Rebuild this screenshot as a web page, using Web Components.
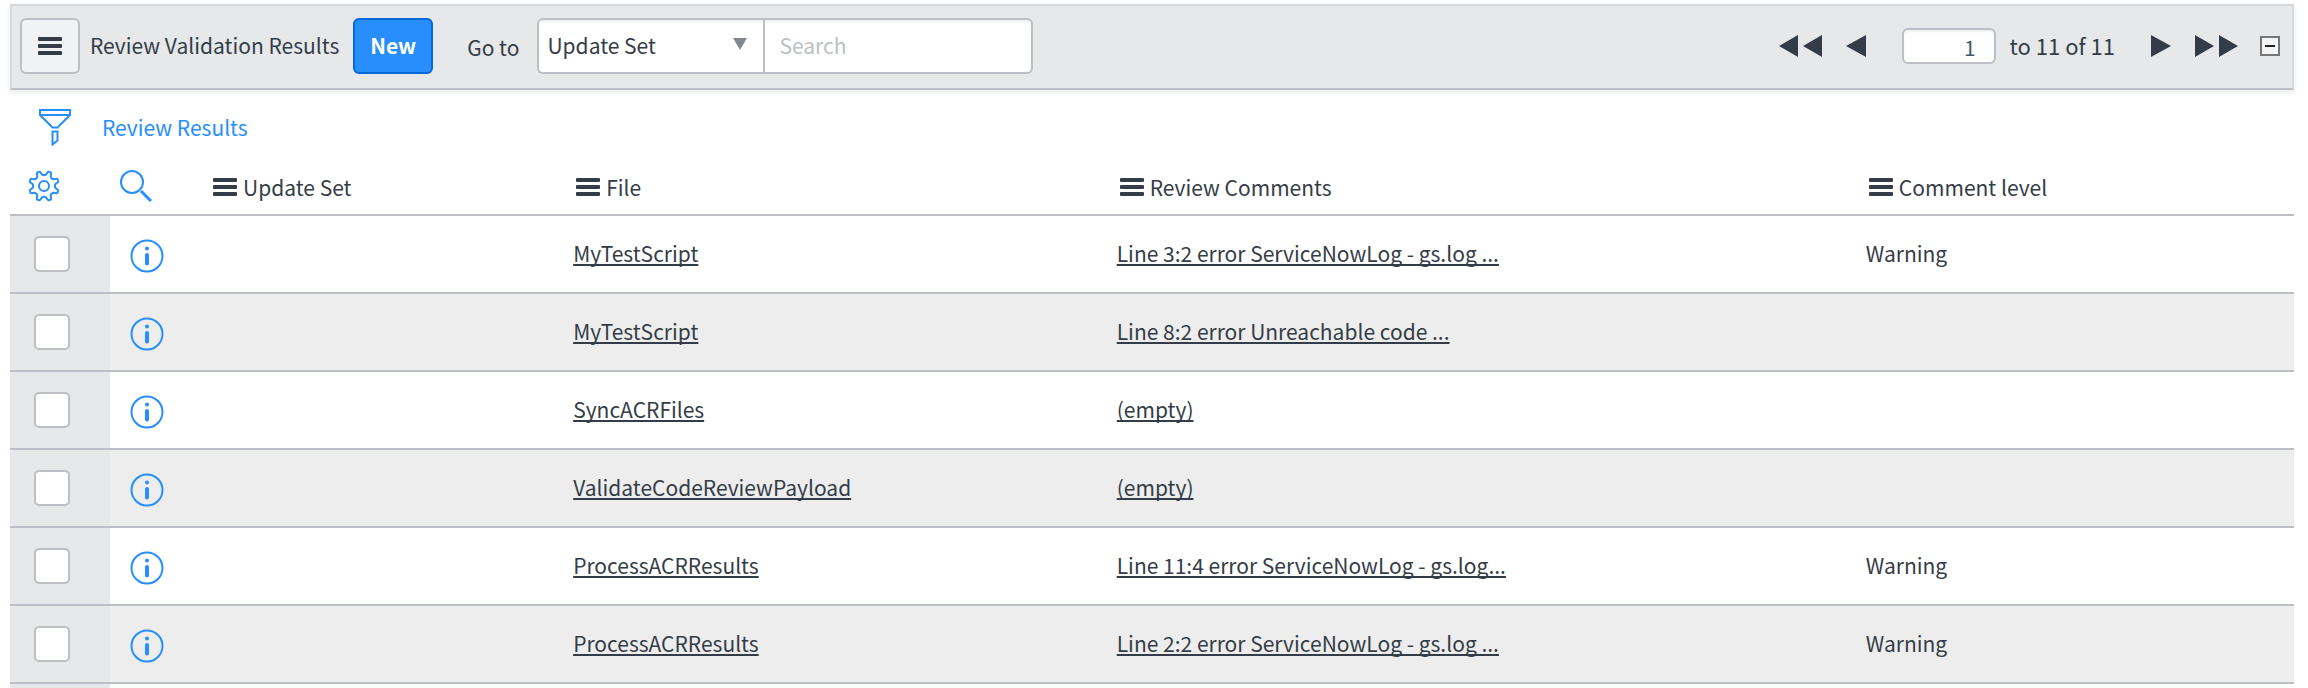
<!DOCTYPE html>
<html lang="en">
<head>
<meta charset="utf-8">
<title>Review Validation Results</title>
<style>
  body { margin: 0; background: #fff; color: #343d47; font: 21px/32px "Noto Sans CJK SC", "Noto Sans", sans-serif; }
</style>
</head>
<body>
<review-list></review-list>
<script>
// Outline of an eight-toothed gear centred on 16,16.
function gearPath() {
  const at = (deg, r) => {
    const a = deg * Math.PI / 180;
    return (16 + r * Math.cos(a)).toFixed(2) + ' ' + (16 + r * Math.sin(a)).toFixed(2);
  };
  let d = '';
  for (let k = 0; k < 8; k++) {
    const a = 22.5 + 45 * k;
    d += (k ? 'L' : 'M') + at(a - 8, 14) + 'Q' + at(a - 6, 15.5) + ' ' + at(a, 15) +
      'Q' + at(a + 6, 15.5) + ' ' + at(a + 8, 14) + 'L' + at(a + 12, 11.8) +
      'Q' + at(a + 22.5, 10) + ' ' + at(a + 33, 11.8);
  }
  return d + 'z';
}

const ICONS = {
  menu: [24, 18, '<path fill="currentColor" d="M1 0h22q1 0 1 1v2q0 1-1 1H1q-1 0-1-1V1q0-1 1-1zM1 7h22q1 0 1 1v2q0 1-1 1H1q-1 0-1-1V8q0-1 1-1zM1 14h22q1 0 1 1v2q0 1-1 1H1q-1 0-1-1v-2q0-1 1-1z"/>'],
  filter: [34, 38, '<g fill="none" stroke="currentColor" stroke-width="2"><path d="M2 2h30v5L19.500 19.500h-5L2 7zM2 7h30M14.500 23.500h5v9l-5 4z"/></g>'],
  gear: [32, 32, `<g fill="none" stroke="currentColor" stroke-width="2" stroke-linejoin="round"><path d="${gearPath()}"/><circle cx="16" cy="16" r="5"/></g>`],
  search: [32, 32, '<g fill="none" stroke="currentColor"><circle cx="12" cy="12" r="11" stroke-width="2"/><path stroke-width="3" d="M21 21 31 31"/></g>'],
  info: [34, 34, '<circle cx="17" cy="17" r="15.500" fill="none" stroke="currentColor" stroke-width="2"/><circle cx="17" cy="9.500" r="2" fill="currentColor"/><path stroke="currentColor" stroke-width="4" stroke-linecap="round" d="M17 16v8.500"/>'],
  first: [43, 22, '<path fill="currentColor" d="M0 11 19 0v22zM24 11 43 0v22z"/>'],
  prev: [20, 22, '<path fill="currentColor" d="M0 11 20 0v22z"/>'],
  next: [20, 22, '<path fill="currentColor" d="M20 11 0 0v22z"/>'],
  last: [43, 22, '<path fill="currentColor" d="M19 11 0 0v22zM43 11 24 0v22z"/>'],
  down: [14, 12, '<path fill="currentColor" d="M0 0h14L7 12z"/>'],
  collapse: [20, 20, '<path fill="#f5f5f5" stroke="#777" stroke-width="2" d="M1 1h18v18H1z"/><path stroke="#222" stroke-width="2" d="M5 10h10"/>']
};

class ListIcon extends HTMLElement {
  connectedCallback() {
    if (this.shadowRoot) return;
    const [w, h, body] = ICONS[this.getAttribute('name')];
    this.attachShadow({ mode: 'open' }).innerHTML =
      `<style>:host{display:inline-flex;flex:none}svg{display:block}</style>
       <svg width="${w}" height="${h}" viewBox="0 0 ${w} ${h}" aria-hidden="true">${body}</svg>`;
  }
}

const BUTTON = 'button{display:inline-flex;align-items:center;justify-content:center;margin:0;padding:0;border:0;background:none;color:inherit;font:inherit;cursor:pointer}';

class ListToolbar extends HTMLElement {
  constructor() {
    super();
    this.attachShadow({ mode: 'open' }).innerHTML = `
<style>
*{box-sizing:border-box}
${BUTTON}
:host{display:flex;align-items:flex-start;justify-content:space-between;box-sizing:border-box;padding:12px 12px 14px 8px;background:#e6e8ea;border:2px solid #d5d8dd;border-bottom-color:#bcbfc6;box-shadow:0 2px 6px rgba(0,0,0,.1)}
.group{display:flex;align-items:center;height:56px}
.menu,.new{height:56px;border:2px solid #bcbfc6;border-radius:6px;background:#f1f2f5}
.menu{width:60px}
h1{margin:0 14px 0 10px;padding-bottom:2px;font:inherit;white-space:nowrap}
.new{width:80px;padding-bottom:2px;background:#278efc;border-color:#0568d9;color:#fff;font-weight:700}
.goto{margin:2px 18px 0 34px;white-space:nowrap}
.pick{position:relative;display:flex}
select,input{margin:0;height:56px;border:2px solid #bcbfc6;background:#fff;color:inherit;font:inherit;outline:0;box-shadow:inset 0 2px 2px rgba(0,0,0,.06)}
select{appearance:none;width:226px;padding:0 8px 2px;border-radius:6px 0 0 6px;border-right:0}
.pick list-icon{position:absolute;right:16px;top:20px;color:#81878e;pointer-events:none}
.search{width:270px;padding:0 14px 2px;border-radius:0 6px 6px 0}
.search::placeholder{color:#bcbfc6;opacity:1}
.page{width:94px;height:36px;margin:0 14px 0 36px;padding:2px 18px 0 8px;border-radius:6px;text-align:right;color:#485563}
.range{padding-bottom:2px;font-size:22px;white-space:nowrap}
.first{margin-right:24px}
.next{margin:0 24px 0 36px}
.collapse{margin-left:22px}
</style>
<div class="group">
  <button class="menu" aria-label="List menu"><list-icon name="menu"></list-icon></button>
  <h1><slot></slot></h1>
  <button class="new">New</button>
  <label class="goto" for="field">Go to</label>
  <div class="pick"><select id="field"><option>Update Set</option></select><list-icon name="down"></list-icon></div>
  <input class="search" type="text" placeholder="Search" aria-label="Search">
</div>
<div class="group">
  <button class="first" aria-label="First page"><list-icon name="first"></list-icon></button>
  <button aria-label="Previous page"><list-icon name="prev"></list-icon></button>
  <input class="page" type="text" value="1" aria-label="Row number">
  <span class="range">to 11 of 11</span>
  <button class="next" aria-label="Next page"><list-icon name="next"></list-icon></button>
  <button aria-label="Last page"><list-icon name="last"></list-icon></button>
  <button class="collapse" aria-label="Collapse list"><list-icon name="collapse"></list-icon></button>
</div>`;
  }
}

class ListBreadcrumb extends HTMLElement {
  constructor() {
    super();
    this.attachShadow({ mode: 'open' }).innerHTML = `
<style>
${BUTTON}
:host{display:flex;align-items:center;gap:30px;box-sizing:border-box;height:70px;padding:4px 28px 0;color:#278efc}
a{color:inherit;text-decoration:none}
</style>
<button aria-label="Filter"><list-icon name="filter"></list-icon></button>
<a href="#"><slot></slot></a>`;
  }
}

const COLUMNS = ['Update Set', 'File', 'Review Comments', 'Comment level'];
const ROWS = [
  ['MyTestScript', 'Line 3:2 error ServiceNowLog - gs.log ...', 'Warning'],
  ['MyTestScript', 'Line 8:2 error Unreachable code ...', ''],
  ['SyncACRFiles', '(empty)', ''],
  ['ValidateCodeReviewPayload', '(empty)', ''],
  ['ProcessACRResults', 'Line 11:4 error ServiceNowLog - gs.log...', 'Warning'],
  ['ProcessACRResults', 'Line 2:2 error ServiceNowLog - gs.log ...', 'Warning']
];

class ListTable extends HTMLElement {
  constructor() {
    super();
    this.attachShadow({ mode: 'open' }).innerHTML = `
<style>
${BUTTON}
*{box-sizing:border-box}
:host{display:block}
table{width:100%;table-layout:fixed;border-collapse:separate;border-spacing:0}
.c-check{width:100px}.c-info{width:90px}.c-set{width:15.9%}.c-file{width:23.8%}.c-comment{width:32.8%}
th,td{padding:0 10px;text-align:left;vertical-align:middle;white-space:nowrap;border-bottom:2px solid #bcbfc6}
th{height:56px;font-weight:400}
th>div{display:flex;align-items:center;gap:6px;padding-left:3px}
th.tool{padding:0 16px;color:#278efc}
th.tool+.tool{padding-left:8px}
th.tool>div{padding:0 0 2px 2px}
td{height:78px;padding-bottom:2px}
tbody tr:nth-child(even){background:#ededed}
td.check{padding:0 24px;background:#e6e8ea}
td.info{padding:4px 20px 0;color:#278efc}
td>button,td>input{vertical-align:top}
input{appearance:none;display:block;width:36px;height:36px;margin:0;border:2px solid #bcbfc6;border-radius:5px;background:#fff}
td a{color:inherit;text-decoration:underline;text-decoration-thickness:2px;text-underline-offset:2px;text-decoration-skip-ink:none}
tfoot td{height:4px;padding:0;border:0}
</style>
<table>
<colgroup><col class="c-check"><col class="c-info"><col class="c-set"><col class="c-file"><col class="c-comment"><col></colgroup>
<thead><tr>
<th class="tool"><div><button aria-label="Personalize list"><list-icon name="gear"></list-icon></button></div></th>
<th class="tool"><div><button aria-label="Search list"><list-icon name="search"></list-icon></button></div></th>
${COLUMNS.map(c => `<th scope="col"><div><button aria-label="${c} options"><list-icon name="menu"></list-icon></button><span>${c}</span></div></th>`).join('')}
</tr></thead>
<tbody>
${ROWS.map(([file, comment, level], i) => `<tr>
<td class="check"><input type="checkbox" aria-label="Select row ${i + 1}"></td>
<td class="info"><button aria-label="Preview row ${i + 1}"><list-icon name="info"></list-icon></button></td>
<td></td><td><a href="#">${file}</a></td><td><a href="#">${comment}</a></td><td>${level}</td></tr>`).join('')}
</tbody>
<tfoot><tr><td class="check"></td><td colspan="5"></td></tr></tfoot>
</table>`;
  }
}

class ReviewList extends HTMLElement {
  constructor() {
    super();
    this.attachShadow({ mode: 'open' }).innerHTML = `
<style>:host{display:block;padding:4px 14px 0 10px}</style>
<list-toolbar>Review Validation Results</list-toolbar>
<list-breadcrumb>Review Results</list-breadcrumb>
<list-table></list-table>`;
  }
}

customElements.define('list-icon', ListIcon);
customElements.define('list-toolbar', ListToolbar);
customElements.define('list-breadcrumb', ListBreadcrumb);
customElements.define('list-table', ListTable);
customElements.define('review-list', ReviewList);
</script>
</body>
</html>
